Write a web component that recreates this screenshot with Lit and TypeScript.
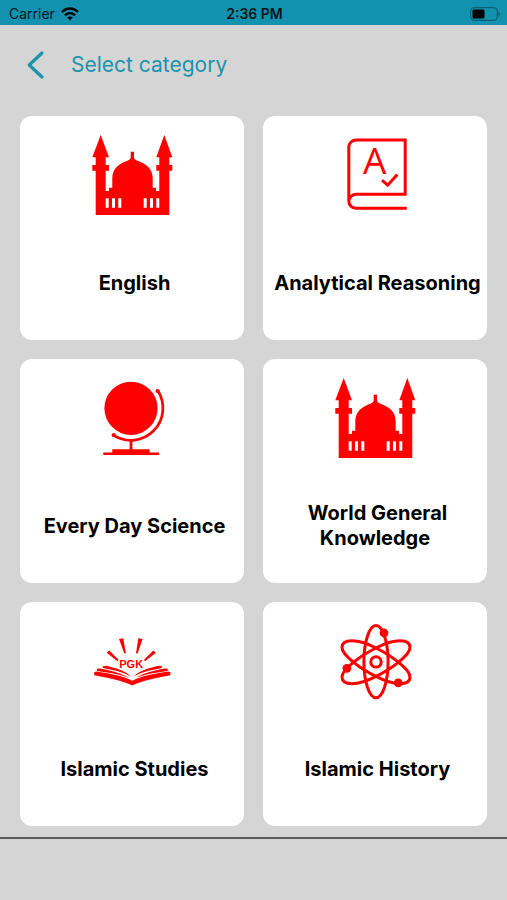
import { LitElement, html, css, svg } from "lit";
import { customElement, property } from "lit/decorators.js";

const mosque = svg`
  <path fill-rule="evenodd" d="M13.7 3 L22 25.3 H18.7 V33 H22 V38.7 H18.7 V59 H22 V55.7 H25.3 V46.3
    C25.3 36 33 31.5 39 29.3 C42 28.4 43.7 27 43.7 25.5 V19.7 H47 V25.5 C47 27 48.7 28.4 51.7 29.3
    C58 31.5 65.7 36 65.7 46.3 V55.7 H69 V59 H72.3 V38.7 H69.3 V33 H72.3 V25.3 H69.3 L77.3 3
    L85.3 25.3 H82.3 V33 H85.3 V38.7 H82.3 V83 H8.7 V38.7 H5.3 V33 H8.7 V25.3 H5.3 Z
    M18.7 66.3 V75.7 H21.7 V66.3 Z M25 66.3 V75.7 H28 V66.3 Z M31.3 66.3 V75.7 H34.3 V66.3 Z
    M56.7 66.3 V75.7 H59.7 V66.3 Z M63 66.3 V75.7 H66 V66.3 Z M69.3 66.3 V75.7 H72.3 V66.3 Z" />`;

const dictionary = svg`
  <g fill="none" stroke="currentColor" stroke-width="3">
    <path d="M76.8 76.3 H26.5 C22.3 76.3 18.8 73.3 18.8 69.3 V15 C18.8 11 22.3 8 26.3 8 H75.2 V62.3 H26.5 C22.3 62.3 18.8 65.3 18.8 69.3" />
    <path d="M52 48.2 L57.7 53.2 L67.3 42.6" />
  </g>
  <text class="letter" x="44.7" y="42" text-anchor="middle">A</text>`;

const globe = svg`
  <circle cx="44" cy="33.3" r="26.6" />
  <path d="M70.9 15.8 A32.2 32.2 0 0 1 26.7 60.4" fill="none" stroke="currentColor" stroke-width="2.7" />
  <circle cx="70.6" cy="16" r="2.1" />
  <circle cx="26.8" cy="60.2" r="2.1" />
  <path d="M42.6 65 H45.4 V74.3 H62.7 V77.4 H72 V80 H16.3 V77.4 H25.3 V74.3 H42.6 Z" />`;

const openBook = svg`
  <path d="M32 21 L36.3 20.3 L38.9 35.3 L37.3 35.6 Z M51.3 20.3 L55.6 21 L50.6 35.6 L49 35.2 Z
    M19.7 34.8 L22.3 32.5 L31.5 41.8 L30.5 43.2 Z M68.9 34.8 L66.3 32.5 L57 41.8 L58 43.2 Z" />
  <path d="M7.2 54.2 L9.2 53.4 C22 55.3 36 57.5 45.3 62.8 C54.6 57.5 68.6 55.3 81.4 53.4 L83.4 54.2 V57.2
    C70 59.5 55 62.5 45.3 67.6 C35.6 62.5 20.6 59.5 7.2 57.2 Z" />
  <path d="M9.8 50.8 L13 50.4 C23 52.4 34 54.6 41.5 59.7 C32 56.2 21 54.4 10 53 Z
    M80.8 50.8 L77.6 50.4 C67.6 52.4 56.6 54.6 49.1 59.7 C58.6 56.2 69.6 54.4 80.6 53 Z
    M15.6 48.2 L19 47.8 C27.5 50 37.5 52 43.5 58.2 C35 53.8 25.5 51.8 15.8 50 Z
    M75 48.2 L71.6 47.8 C63.1 50 53.1 52 47.1 58.2 C55.6 53.8 65.1 51.8 74.8 50 Z" />
  <text class="initials" x="44.2" y="50" text-anchor="middle">PGK</text>`;

const atom = svg`
  <g fill="none" stroke="currentColor" stroke-width="3">
    <ellipse cx="46" cy="43.7" rx="12.1" ry="36.1" />
    <path d="M12 29.5 C12 25 15.5 22.8 22 22.8 C30 22.8 38 25.8 46 30 C54 34 62 39 68.3 44.2
      C75 49.5 80 54.4 80 59 C80 63.5 76.5 65.7 70 65.7 C62 65.7 54 62.6 46 58.4
      C38 54.4 30 49.5 23.7 44.3 C17 39 12 34 12 29.5 Z" />
    <path d="M80 29.5 C80 25 76.5 22.8 70 22.8 C62 22.8 54 25.8 46 30 C38 34 30 39 23.7 44.2
      C17 49.5 12 54.4 12 59 C12 63.5 15.5 65.7 22 65.7 C30 65.7 38 62.6 46 58.4
      C54 54.4 62 49.5 68.3 44.3 C75 39 80 34 80 29.5 Z" />
    <circle cx="46" cy="43.9" r="5.2" />
  </g>
  <circle cx="54" cy="15" r="4.4" />
  <circle cx="16.9" cy="50.3" r="4.4" />
  <circle cx="68.2" cy="64.8" r="4.4" />`;

const categories = [
  { label: "English", icon: mosque },
  { label: "Analytical Reasoning", icon: dictionary },
  { label: "Every Day Science", icon: globe },
  { label: "World General Knowledge", icon: mosque },
  { label: "Islamic Studies", icon: openBook },
  { label: "Islamic History", icon: atom },
];

@customElement("category-card")
export class CategoryCard extends LitElement {
  @property() label = "";
  @property({ attribute: false }) icon: unknown;

  static styles = css`
    :host {
      display: block;
    }
    .card {
      box-sizing: border-box;
      width: 100%;
      aspect-ratio: 1;
      display: flex;
      flex-direction: column;
      align-items: center;
      margin: 0;
      padding: 16px 0 0;
      border: 0;
      border-radius: 12px;
      background: #fff;
      color: #000;
      font: 700 20px/25px Inter, "Liberation Sans", sans-serif;
      cursor: pointer;
    }
    .icon {
      flex: none;
      width: 90px;
      height: 90px;
      color: #fe0000;
      fill: currentColor;
    }
    .letter {
      font: 400 37px "Open Sans", sans-serif;
    }
    .initials {
      font: 700 11px "Liberation Sans", sans-serif;
    }
    .label {
      flex: 1;
      display: grid;
      align-items: center;
      padding-top: 4px;
      text-align: center;
      text-indent: 5px;
    }
  `;

  render() {
    return html`<button class="card" type="button">
      <svg class="icon" viewBox="0 0 90 90" aria-hidden="true">${this.icon}</svg>
      <span class="label">${this.label}</span>
    </button>`;
  }
}

@customElement("status-bar")
export class StatusBar extends LitElement {
  static styles = css`
    :host {
      display: grid;
      grid-template-columns: 1fr auto 1fr;
      align-items: center;
      height: 25px;
      padding: 2px 7px 0 9px;
      box-sizing: border-box;
      background: #1292ae;
      color: #06161b;
      font: 400 14px/20px Inter, "Liberation Sans", sans-serif;
    }
    .carrier {
      display: flex;
      align-items: center;
      gap: 6px;
    }
    .time {
      font-weight: 600;
    }
    .battery {
      justify-self: end;
    }
  `;

  render() {
    return html`
      <span class="carrier">
        Carrier
        <svg width="18" height="14" viewBox="0 0 18 14" role="img" aria-label="Wi-Fi">
          <g fill="none" stroke="#000" stroke-width="2.4">
            <path d="M1 5 C5.6 0.4 12.4 0.4 17 5" />
            <path d="M4 8.3 C6.9 5.5 11.1 5.5 14 8.3" />
          </g>
          <path d="M6.2 10.6 C7.8 9 10.2 9 11.8 10.6 L9 13.6 Z" />
        </svg>
      </span>
      <span class="time">2:36 PM</span>
      <svg class="battery" width="30" height="14" viewBox="0 0 30 14" role="img" aria-label="Battery">
        <rect x="0.7" y="0.7" width="26.6" height="12.6" rx="3.6" fill="none" stroke="#0c5f72" stroke-width="1.2" />
        <rect x="2.5" y="2.5" width="12" height="9" rx="1.5" />
        <path d="M28.3 4.5 C30.3 5.4 30.3 8.6 28.3 9.5 Z" fill="#0c5f72" />
      </svg>
    `;
  }
}

@customElement("app-root")
export class AppRoot extends LitElement {
  static styles = css`
    :host {
      display: flex;
      flex-direction: column;
      min-height: 100vh;
      background: #d5d5d5;
      font-family: Inter, "Liberation Sans", sans-serif;
    }
    .header {
      display: flex;
      align-items: center;
      gap: 26px;
      height: 80px;
      padding: 0 26px;
      color: #1b93ac;
    }
    .back {
      display: block;
      padding: 0;
      border: 0;
      background: none;
      color: inherit;
      cursor: pointer;
    }
    .chevron {
      display: block;
    }
    .title {
      margin: 0;
      font-size: 21px;
      line-height: 28px;
      font-weight: 400;
    }
    .grid {
      display: grid;
      grid-template-columns: 1fr 1fr;
      gap: 19px;
      padding: 11px 20px 11px;
    }
    .footer {
      flex: 1;
      border-top: 2px solid #5a5a5a;
    }
  `;

  render() {
    return html`
      <status-bar></status-bar>
      <header class="header">
        <button class="back" type="button" aria-label="Back">
          <svg class="chevron" width="19" height="30" viewBox="0 0 19 30">
            <path d="M16 3 L3.2 15 L16 27" fill="none" stroke="currentColor" stroke-width="3.2" stroke-linecap="round" stroke-linejoin="round" />
          </svg>
        </button>
        <h1 class="title">Select category</h1>
      </header>
      <main class="grid">
        ${categories.map(
          (c) => html`<category-card .label=${c.label} .icon=${c.icon}></category-card>`,
        )}
      </main>
      <footer class="footer"></footer>
    `;
  }
}
